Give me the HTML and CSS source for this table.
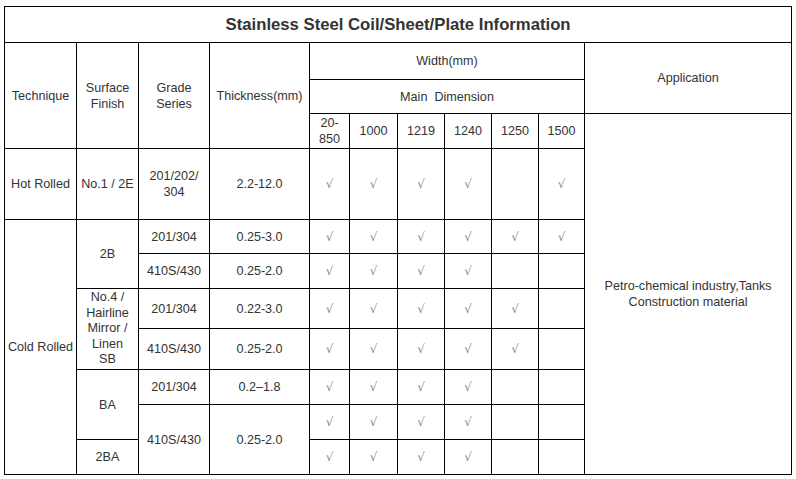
FILE: index.html
```html
<!DOCTYPE html>
<html>
<head>
<meta charset="utf-8">
<link rel="stylesheet" href="styles.css">
</head>
<body>
<div class="wrap">
<table class="info">
<colgroup>
<col class="c72"><col class="c62"><col class="c71"><col class="c100"><col class="c40"><col class="c48"><col class="c47"><col class="c47"><col class="c47"><col class="c46"><col class="c207">
</colgroup>
<tr class="r36"><td colspan="11" class="title">Stainless Steel Coil/Sheet/Plate Information</td></tr>
<tr class="r37">
<td rowspan="3">Technique</td>
<td rowspan="3">Surface<br>Finish</td>
<td rowspan="3">Grade<br>Series</td>
<td rowspan="3">Thickness(mm)</td>
<td colspan="6">Width(mm)</td>
<td rowspan="2">Application</td>
</tr>
<tr class="r34"><td colspan="6">Main&nbsp; Dimension</td></tr>
<tr class="r35">
<td>20-<br>850</td><td>1000</td><td>1219</td><td>1240</td><td>1250</td><td>1500</td>
<td rowspan="9" class="app">Petro-chemical industry,Tanks<br>Construction material</td>
</tr>
<tr class="r71">
<td>Hot Rolled</td><td>No.1 / 2E</td><td>201/202/<br>304</td><td>2.2-12.0</td>
<td class="ck">√</td><td class="ck">√</td><td class="ck">√</td><td class="ck">√</td><td></td><td class="ck">√</td>
</tr>
<tr class="r34">
<td rowspan="7">Cold Rolled</td><td rowspan="2">2B</td><td>201/304</td><td>0.25-3.0</td>
<td class="ck">√</td><td class="ck">√</td><td class="ck">√</td><td class="ck">√</td><td class="ck">√</td><td class="ck">√</td>
</tr>
<tr class="r35">
<td>410S/430</td><td>0.25-2.0</td>
<td class="ck">√</td><td class="ck">√</td><td class="ck">√</td><td class="ck">√</td><td></td><td></td>
</tr>
<tr class="r40">
<td rowspan="2" class="finish">No.4 /<br>Hairline<br>Mirror /<br>Linen<br>SB</td><td>201/304</td><td>0.22-3.0</td>
<td class="ck">√</td><td class="ck">√</td><td class="ck">√</td><td class="ck">√</td><td class="ck">√</td><td></td>
</tr>
<tr class="r41">
<td>410S/430</td><td>0.25-2.0</td>
<td class="ck">√</td><td class="ck">√</td><td class="ck">√</td><td class="ck">√</td><td class="ck">√</td><td></td>
</tr>
<tr class="r35">
<td rowspan="2">BA</td><td>201/304</td><td>0.2–1.8</td>
<td class="ck">√</td><td class="ck">√</td><td class="ck">√</td><td class="ck">√</td><td></td><td></td>
</tr>
<tr class="r35">
<td rowspan="2">410S/430</td><td rowspan="2">0.25-2.0</td>
<td class="ck">√</td><td class="ck">√</td><td class="ck">√</td><td class="ck">√</td><td></td><td></td>
</tr>
<tr class="r35">
<td>2BA</td>
<td class="ck">√</td><td class="ck">√</td><td class="ck">√</td><td class="ck">√</td><td></td><td></td>
</tr>
</table>
</div>
</body>
</html>
```
FILE: styles.css
```css
html, body {
  margin: 0;
  padding: 0;
  background: #fff;
}
.wrap {
  padding: 6px 0 0 4px;
}
.info {
  border-collapse: collapse;
  table-layout: fixed;
  width: 788px;
  font-family: "Liberation Sans", Arial, sans-serif;
  font-size: 12.6px;
  line-height: 16px;
  color: #333;
}
.info td {
  border: 1px solid #000;
  padding: 0;
  text-align: center;
  vertical-align: middle;
}
.c72 { width: 72px; }
.c62 { width: 62px; }
.c71 { width: 71px; }
.c100 { width: 100px; }
.c40 { width: 40px; }
.c48 { width: 48px; }
.c47 { width: 47px; }
.c46 { width: 46px; }
.c207 { width: 207px; }
.r34 { height: 34px; }
.r35 { height: 35px; }
.r36 { height: 36px; }
.r37 { height: 37px; }
.r40 { height: 40px; }
.r41 { height: 41px; }
.r71 { height: 71px; }
.info td.title {
  font-size: 16.7px;
  font-weight: bold;
  color: #333;
}
.info td.finish {
  line-height: 15.5px;
}
.info td.ck {
  font-family: "DejaVu Sans", sans-serif;
  font-size: 12px;
  color: #888;
}
.info td.app {
  line-height: 16px;
}
```
